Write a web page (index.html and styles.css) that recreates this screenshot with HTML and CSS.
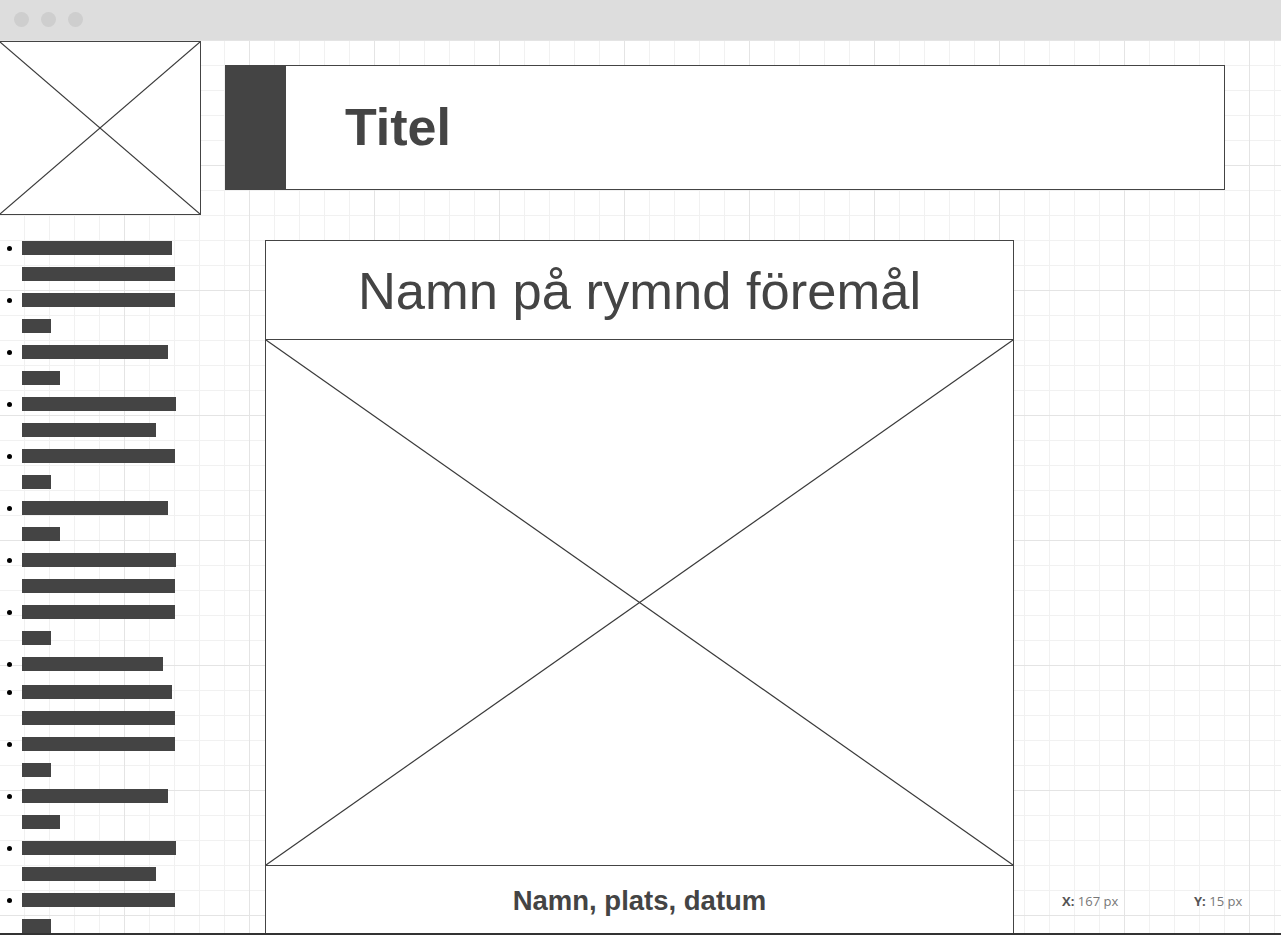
FILE: index.html
```html
<!DOCTYPE html>
<html>

<head>
    <meta charset="utf-8">
    <link rel="stylesheet" href="styles.css">
</head>

<body>
    <div class="window">
        <div class="topbar">
            <span class="light"></span>
            <span class="light"></span>
            <span class="light"></span>
        </div>

        <div class="canvas">
            <!-- vänster kolumn: logga + meny -->
            <div class="side">
                <div class="logo">
                    <svg class="cross" viewBox="0 0 100 100" preserveAspectRatio="none">
                        <line x1="0" y1="0" x2="100" y2="100" />
                        <line x1="100" y1="0" x2="0" y2="100" />
                    </svg>
                </div>

                <ul class="menu">
                    <li><span class="dot"></span><div class="lines"><span class="bar" style="width:150px"></span><span class="bar" style="width:153px"></span></div></li>
                    <li><span class="dot"></span><div class="lines"><span class="bar" style="width:153px"></span><span class="bar" style="width:29px"></span></div></li>
                    <li><span class="dot"></span><div class="lines"><span class="bar" style="width:146px"></span><span class="bar" style="width:38px"></span></div></li>
                    <li><span class="dot"></span><div class="lines"><span class="bar" style="width:154px"></span><span class="bar" style="width:134px"></span></div></li>
                    <li><span class="dot"></span><div class="lines"><span class="bar" style="width:153px"></span><span class="bar" style="width:29px"></span></div></li>
                    <li><span class="dot"></span><div class="lines"><span class="bar" style="width:146px"></span><span class="bar" style="width:38px"></span></div></li>
                    <li><span class="dot"></span><div class="lines"><span class="bar" style="width:154px"></span><span class="bar" style="width:153px"></span></div></li>
                    <li><span class="dot"></span><div class="lines"><span class="bar" style="width:153px"></span><span class="bar" style="width:29px"></span></div></li>
                    <li class="single"><span class="dot"></span><div class="lines"><span class="bar" style="width:141px"></span></div></li>
                    <li><span class="dot"></span><div class="lines"><span class="bar" style="width:150px"></span><span class="bar" style="width:153px"></span></div></li>
                    <li><span class="dot"></span><div class="lines"><span class="bar" style="width:153px"></span><span class="bar" style="width:29px"></span></div></li>
                    <li><span class="dot"></span><div class="lines"><span class="bar" style="width:146px"></span><span class="bar" style="width:38px"></span></div></li>
                    <li><span class="dot"></span><div class="lines"><span class="bar" style="width:154px"></span><span class="bar" style="width:134px"></span></div></li>
                    <li><span class="dot"></span><div class="lines"><span class="bar" style="width:153px"></span><span class="bar" style="width:29px"></span></div></li>
                </ul>
            </div>

            <!-- huvudyta -->
            <div class="main">
                <div class="title-box">
                    <div class="title-mark"></div>
                    <h1 class="title">Titel</h1>
                </div>

                <div class="content">
                    <div class="panel">
                        <div class="panel-head">Namn på rymnd föremål</div>
                        <div class="panel-img">
                            <svg class="cross" viewBox="0 0 100 100" preserveAspectRatio="none">
                                <line x1="0" y1="0" x2="100" y2="100" />
                                <line x1="100" y1="0" x2="0" y2="100" />
                            </svg>
                        </div>
                        <div class="panel-foot">Namn, plats, datum</div>
                    </div>

                    <div class="coords">
                        <span class="coord"><b>X:</b> 167 px</span>
                        <span class="coord"><b>Y:</b> 15 px</span>
                    </div>
                </div>
            </div>
        </div>
    </div>
</body>

</html>
```

FILE: styles.css
```css
body {
    margin: 0;
    font-family: "Liberation Sans", Arial, sans-serif;
    color: #444444;
    background-color: white;
}

.window {
    height: 935px;
    display: flex;
    flex-direction: column;
    overflow: hidden;
}

.topbar {
    height: 40px;
    flex-shrink: 0;
    background-color: #dddddd;
    display: flex;
    align-items: center;
    gap: 12px;
    padding: 0 0 2px 14px;
    box-sizing: border-box;
}

.light {
    width: 15px;
    height: 15px;
    border-radius: 50%;
    background-color: #cecece;
}

.canvas {
    height: 893px;
    flex-shrink: 0;
    display: flex;
    overflow: hidden;
    border-bottom: 2px solid #333333;
    background-color: white;
    background-image:
        linear-gradient(to right, #e4e4e4 1px, transparent 1px),
        linear-gradient(to bottom, #e4e4e4 1px, transparent 1px),
        linear-gradient(to right, #f1f1f1 1px, transparent 1px),
        linear-gradient(to bottom, #f1f1f1 1px, transparent 1px);
    background-size: 125px 125px, 125px 125px, 25px 25px, 25px 25px;
    background-position: 124px 0, 0 0, 24px 0, 0 0;
}

/* vänster kolumn */

.side {
    width: 201px;
    flex-shrink: 0;
}

.logo {
    width: 202px;
    height: 174px;
    margin: 1px 0 0 -1px;
    border: 1px solid #444444;
    box-sizing: border-box;
    background-color: white;
}

.cross {
    display: block;
    width: 100%;
    height: 100%;
}

.cross line {
    stroke: #3a3a3a;
    stroke-width: 1.2;
    vector-effect: non-scaling-stroke;
}

.menu {
    list-style: none;
    margin: 20px 0 0 0;
    padding: 0;
}

.menu li {
    display: flex;
    align-items: flex-start;
}

.menu li.single {
    padding-bottom: 2px;
}

.dot {
    width: 5px;
    height: 5px;
    border-radius: 50%;
    background-color: #000000;
    margin: 11px 10px 0 7px;
    flex-shrink: 0;
}

.lines {
    display: flex;
    flex-direction: column;
    align-items: flex-start;
}

.bar {
    display: block;
    height: 14px;
    margin: 6px 0;
    background-color: #444444;
}

/* huvudyta */

.main {
    margin-left: 24px;
    display: flex;
    flex-direction: column;
    min-height: 0;
}

.title-box {
    width: 1000px;
    height: 125px;
    margin-top: 25px;
    flex-shrink: 0;
    border: 1px solid #444444;
    box-sizing: border-box;
    background-color: white;
    display: flex;
    align-items: center;
}

.title-mark {
    width: 61px;
    height: 125px;
    margin: -1px 0 -1px -1px;
    background-color: #444444;
}

.title {
    margin: 0 0 0 59px;
    font-size: 52px;
    font-weight: bold;
    color: #444444;
    padding-bottom: 2px;
}

.content {
    flex: 1;
    min-height: 0;
    margin-top: 50px;
    margin-left: 40px;
    display: flex;
}

.panel {
    width: 749px;
    flex-shrink: 0;
    border: 1px solid #444444;
    box-sizing: border-box;
    background-color: white;
    align-self: flex-start;
}

.panel-head {
    height: 99px;
    border-bottom: 1px solid #444444;
    display: flex;
    align-items: center;
    justify-content: center;
    font-size: 52.5px;
    box-sizing: border-box;
}

.panel-img {
    height: 526px;
    border-bottom: 1px solid #444444;
    box-sizing: border-box;
}

.panel-foot {
    height: 70px;
    display: flex;
    align-items: center;
    justify-content: center;
    font-size: 27.5px;
    font-weight: bold;
}

.coords {
    align-self: flex-end;
    margin: 0 0 23px 48px;
    display: flex;
    font-family: "Open Sans", "Noto Sans", sans-serif;
    font-size: 13px;
    color: #777777;
}

.coord {
    width: 132px;
}

.coord b {
    color: #555555;
}
```
